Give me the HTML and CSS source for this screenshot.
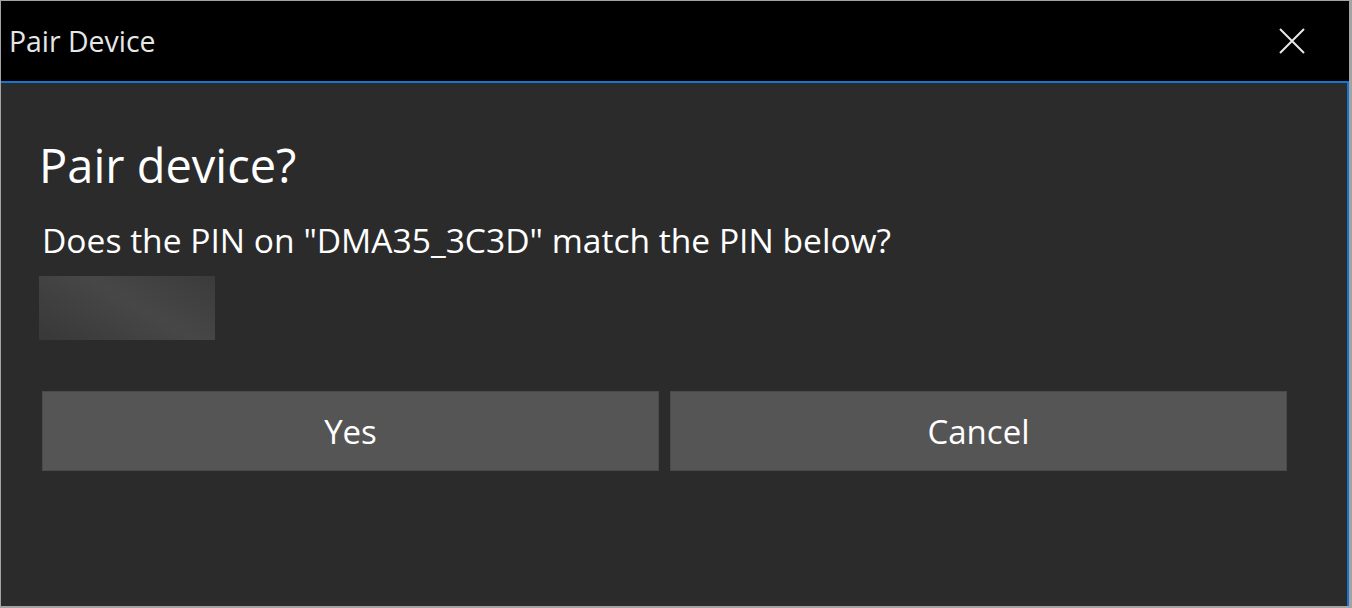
FILE: index.html
```html
<!DOCTYPE html>
<html lang="en">
<head>
    <meta charset="UTF-8">
    <meta name="viewport" content="width=device-width, initial-scale=1.0">
    <title>Pair Device</title>
    <link rel="stylesheet" href="styles.css">
</head>
<body>
    <div class="window">
        <div class="titlebar">
            <span class="title">Pair Device</span>
            <svg class="close" width="26" height="26" viewBox="0 0 26 26">
                <path d="M1 1 L25 25 M25 1 L1 25" stroke="#e8e8e8" stroke-width="2" fill="none"/>
            </svg>
        </div>
        <div class="content">
            <h1>Pair device?</h1>
            <p class="question">Does the PIN on "DMA35_3C3D" match the PIN below?</p>
            <div class="pin"></div>
            <div class="actions">
                <button type="button">Yes</button>
                <button type="button">Cancel</button>
            </div>
        </div>
    </div>
</body>
</html>
```

FILE: styles.css
```css
body {
    margin: 0;
    background-color: #a3a3a3;
    font-family: "Open Sans", "Noto Sans", sans-serif;
    color: #fff;
}
.window {
    margin: 1px 3px 0 1px;
    height: 605px;
    display: flex;
    flex-direction: column;
}
.titlebar {
    height: 80px;
    background: #000;
    display: flex;
    align-items: center;
    justify-content: space-between;
    padding: 0 44px 0 8px;
}
.title {
    font-size: 28.4px;
    color: #e6e6e6;
}
.content {
    flex: 1;
    background: #2b2b2b;
    border-top: 2px solid #1576d2;
    border-right: 2px solid #1576d2;
    padding: 52px 60px 0 38px;
}
h1 {
    margin: 0;
    font-size: 47px;
    font-weight: normal;
    line-height: 60px;
}
.question {
    margin: 25px 0 0 3px;
    font-size: 33.6px;
    line-height: 40px;
}
.pin {
    margin-top: 16px;
    width: 176px;
    height: 64px;
    background: linear-gradient(30deg, #383838, #474747 55%, #3b3b3b);
}
.actions {
    margin: 51px 0 0 3px;
    display: flex;
    gap: 11px;
}
.actions button {
    flex: 1;
    height: 80px;
    background: #555;
    border: 1px solid #4a4a4a;
    color: #fff;
    font-family: inherit;
    font-size: 33px;
}
```
